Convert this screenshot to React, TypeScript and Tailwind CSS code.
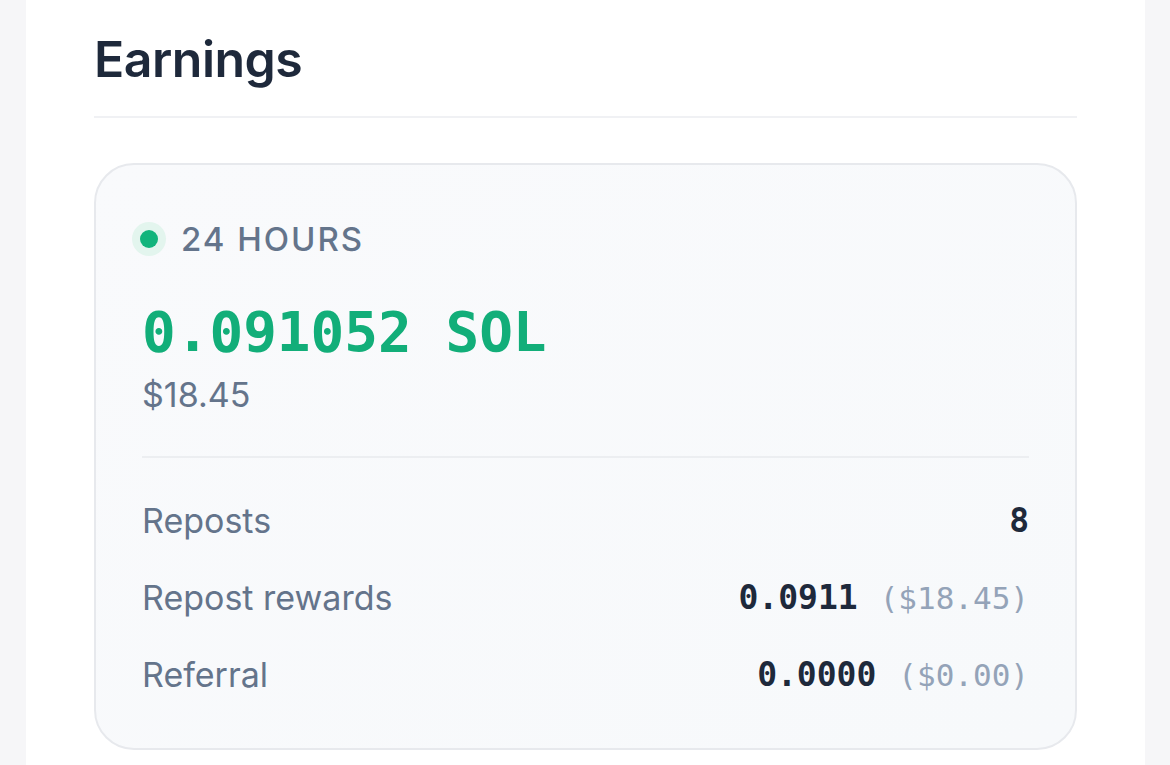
import React from "react";

const mono = { fontFamily: '"DejaVu Sans Mono", "Liberation Mono", monospace' };

function Row({ label, value, sub }: { label: string; value: string; sub?: string }) {
  return (
    <div className="flex items-center justify-between h-[77px]">
      <span className="text-[34px] text-[#64748b]">{label}</span>
      <span className="flex items-baseline gap-[22px]">
        <span className="text-[33px] font-bold text-[#1e293b]" style={mono}>{value}</span>
        {sub && <span className="text-[31px] text-[#94a3b8]" style={mono}>{sub}</span>}
      </span>
    </div>
  );
}

export default function App() {
  return (
    <div className="min-h-[765px] w-[1170px] bg-[#f6f6f8] flex" style={{ fontFamily: 'Inter, "Noto Sans", sans-serif' }}>
      <div className="ml-[26px] w-[1119px] bg-white px-[68px] pt-[34px] min-h-[765px]">
        <h1 className="text-[50px] leading-none font-semibold text-[#1e293b] tracking-[-0.01em]">Earnings</h1>
        <div className="mt-[32px] h-[2px] bg-[#f0f1f4]" />
        <div className="mt-[45px] rounded-[40px] border-2 border-[#e7e9ed] bg-gradient-to-br from-[#f9fafc] to-[#f7f9fb] px-[46px] pt-[57px] pb-[35px]">
          <div className="flex items-center gap-[15px]">
            <span className="w-[34px] h-[34px] rounded-full bg-[#e3f5ee] flex items-center justify-center ml-[-10px]">
              <span className="w-[18px] h-[18px] rounded-full bg-[#12b47c]" />
            </span>
            <span className="text-[33px] font-medium tracking-[0.06em] text-[#64748b] leading-none">24 HOURS</span>
          </div>
          <div className="mt-[48px] text-[56px] font-bold leading-none text-[#12ae79]" style={mono}>0.091052 SOL</div>
          <div className="mt-[18px] text-[34px] text-[#64748b] leading-none">$18.45</div>
          <div className="mt-[44px] h-[2px] bg-[#eceef1]" />
          <div className="mt-[24px]">
            <Row label="Reposts" value="8" />
            <Row label="Repost rewards" value="0.0911" sub="($18.45)" />
            <Row label="Referral" value="0.0000" sub="($0.00)" />
          </div>
        </div>
      </div>
    </div>
  );
}
